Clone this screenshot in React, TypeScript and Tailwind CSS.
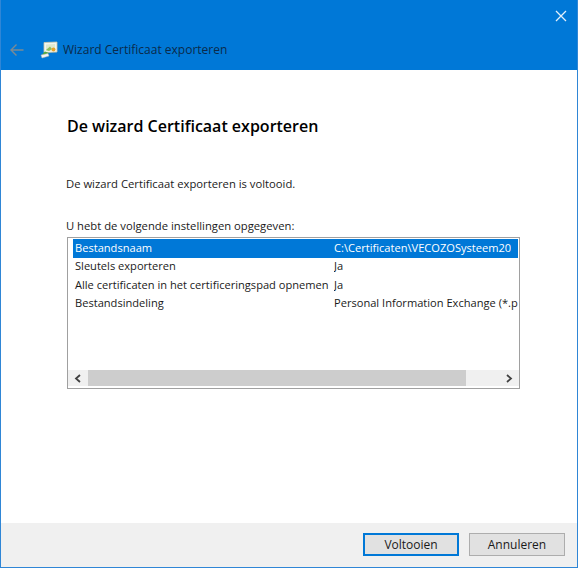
const rows = [
  ['Bestandsnaam', 'C:\\Certificaten\\VECOZOSysteem20'],
  ['Sleutels exporteren', 'Ja'],
  ['Alle certificaten in het certificeringspad opnemen', 'Ja'],
  ['Bestandsindeling', 'Personal Information Exchange (*.p'],
]

function WizardIcon() {
  return (
    <svg width="18" height="18" viewBox="0 0 18 18" className="shrink-0">
      <path d="M4 1.5 L17 1 L17 11 L4 11.5 Z" fill="#f3f6ee" stroke="#c9c7a8" strokeWidth="0.8" />
      <path d="M6 3.5 L15 3 L15 9.5 L6 10 Z" fill="#dfe9cf" />
      <path d="M6 9 L10 5.5 L12 8 L9 10 Z" fill="#8fbf5a" />
      <circle cx="13.5" cy="8.5" r="2" fill="#e8a32a" />
      <path d="M5 10.5 L9 12 L5 15 L2 13.5 Z" fill="#52a83c" />
      <path d="M1 14 L8 12.5 L9 15 L2 17 Z" fill="#f4f4f4" stroke="#b5b5b5" strokeWidth="0.5" />
    </svg>
  )
}

export default function App() {
  return (
    <div className="w-[578px] h-[568px] flex flex-col bg-white border-x border-b border-[#2f86d6] font-['Open_Sans','Noto_Sans',sans-serif] text-[11.1px] text-[#1a1a1a] overflow-hidden">
      <header className="h-[70px] shrink-0 bg-[#0078d7] relative flex items-center pl-[8px] pt-[29px]">
        <svg width="16" height="14" viewBox="0 0 16 14" className="shrink-0" fill="none" stroke="#7b8a94" strokeWidth="1.4">
          <path d="M14.5 7 H2 M7.5 1.5 L2 7 L7.5 12.5" />
        </svg>
        <div className="ml-[15px]">
          <WizardIcon />
        </div>
        <span className="ml-[5px] text-[12px] text-[#0b2a4a]">Wizard Certificaat exporteren</span>
        <svg width="12" height="12" viewBox="0 0 12 12" className="absolute right-[10px] top-[10px]" stroke="#e3f0fb" strokeWidth="1.3">
          <path d="M1 1 L11 11 M11 1 L1 11" />
        </svg>
      </header>

      <main className="flex-1 pl-[65px] pr-[57px]">
        <h1 className="mt-[45px] ml-px text-[16px] leading-[22px] font-semibold text-black">De wizard Certificaat exporteren</h1>
        <p className="mt-[39px] leading-[16px] text-[11.25px]">De wizard Certificaat exporteren is voltooid.</p>
        <p className="mt-[26px] leading-[16px] text-[11.25px]">U hebt de volgende instellingen opgegeven:</p>

        <div className="mt-[3px] ml-px h-[152px] border border-[#a0a0a0] flex flex-col">
          <div className="flex-1 pt-px pl-[5px] pr-px overflow-hidden">
            {rows.map((r, i) => (
              <div
                key={r[0]}
                className={i === 0 ? 'flex h-[18.5px] items-center bg-[#0078d7] text-white' : 'flex h-[18.5px] items-center'}
              >
                <span className="w-[261px] shrink-0 pl-[2px] whitespace-nowrap">{r[0]}</span>
                <span className="whitespace-nowrap overflow-hidden">{r[1]}</span>
              </div>
            ))}
          </div>
          <div className="h-[16px] shrink-0 mb-[2px] flex items-center bg-[#f0f0f0]">
            <div className="w-[20px] flex justify-center">
              <svg width="8" height="9" viewBox="0 0 8 9" fill="none" stroke="#404040" strokeWidth="1.8">
                <path d="M6 1 L2 4.5 L6 8" />
              </svg>
            </div>
            <div className="w-[378px] h-full bg-[#cdcdcd]" />
            <div className="flex-1 flex justify-end pr-[6px]">
              <svg width="8" height="9" viewBox="0 0 8 9" fill="none" stroke="#404040" strokeWidth="1.8">
                <path d="M2 1 L6 4.5 L2 8" />
              </svg>
            </div>
          </div>
        </div>
      </main>

      <footer className="h-[44px] shrink-0 bg-[#f0f0f0] flex items-start justify-end gap-[10px] pt-[10px] pr-[12px]">
        <button className="w-[96px] h-[23px] bg-[#e1e1e1] border-2 border-[#0078d7] text-[12px] leading-none text-[#1a1a1a]">Voltooien</button>
        <button className="w-[96px] h-[23px] bg-[#e1e1e1] border border-[#adadad] text-[12px] leading-none text-[#1a1a1a]">Annuleren</button>
      </footer>
    </div>
  )
}
